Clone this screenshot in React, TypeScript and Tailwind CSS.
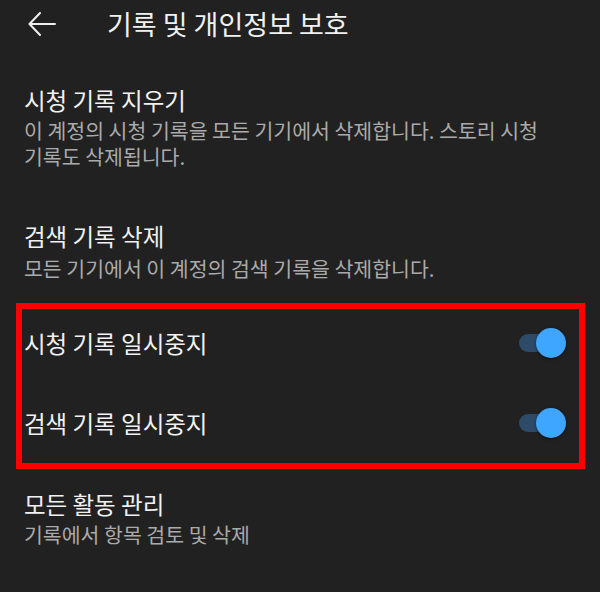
import React from "react";

const font = { fontFamily: '"Noto Sans CJK KR", "Noto Sans", sans-serif' };

const Toggle: React.FC = () => (
  <div className="relative w-[47px] h-[30px]">
    <div className="absolute left-0 top-[6px] w-[40px] h-[18px] rounded-full bg-[#2d4a68]" />
    <div className="absolute right-0 top-0 w-[30px] h-[30px] rounded-full bg-[#3ea6ff] shadow-[0_1px_3px_rgba(0,0,0,0.5)]" />
  </div>
);

const App: React.FC = () => {
  return (
    <div
      className="w-[600px] h-[592px] bg-[#212121] text-[#f1f1f1] overflow-hidden"
      style={font}
    >
      {/* Header */}
      <div className="h-[48px] flex items-center">
        <div className="pl-[28px] w-[107px]">
          <svg width="28" height="24" viewBox="0 0 28 24" fill="none">
            <path
              d="M27 12H2M12 1L1.5 12L12 23"
              stroke="#eeeeee"
              strokeWidth="2"
              strokeLinecap="round"
              strokeLinejoin="round"
            />
          </svg>
        </div>
        <h1 className="text-[27px] leading-[30px] font-normal">기록 및 개인정보 보호</h1>
      </div>

      {/* 시청 기록 지우기 */}
      <div className="pl-[24px] pr-[40px] mt-[37px]">
        <div className="text-[23.5px] leading-[30px]">시청 기록 지우기</div>
        <div className="text-[20.5px] leading-[26px] text-[#aaaaaa] mt-[2px]">
          이 계정의 시청 기록을 모든 기기에서 삭제합니다. 스토리 시청 기록도 삭제됩니다.
        </div>
      </div>

      {/* 검색 기록 삭제 */}
      <div className="pl-[24px] pr-[40px] mt-[52px]">
        <div className="text-[23.5px] leading-[30px]">검색 기록 삭제</div>
        <div className="text-[20.5px] leading-[26px] text-[#aaaaaa] mt-[4px]">
          모든 기기에서 이 계정의 검색 기록을 삭제합니다.
        </div>
      </div>

      {/* Highlighted toggles */}
      <div className="mx-[16px] w-[569px] mt-[22px] border-[6px] border-[#ff0000] pb-[6px]">
        <div className="h-[68px] flex items-center justify-between pl-[2px] pr-[13px]">
          <span className="text-[23.5px] leading-[30px]">시청 기록 일시중지</span>
          <Toggle />
        </div>
        <div className="h-[68px] mt-[12px] flex items-center justify-between pl-[2px] pr-[13px]">
          <span className="text-[23.5px] leading-[30px]">검색 기록 일시중지</span>
          <Toggle />
        </div>
      </div>

      {/* 모든 활동 관리 */}
      <div className="pl-[24px] pr-[40px] mt-[20px]">
        <div className="text-[23.5px] leading-[30px]">모든 활동 관리</div>
        <div className="text-[20.5px] leading-[26px] text-[#aaaaaa] mt-[2px]">
          기록에서 항목 검토 및 삭제
        </div>
      </div>
    </div>
  );
};

export default App;
